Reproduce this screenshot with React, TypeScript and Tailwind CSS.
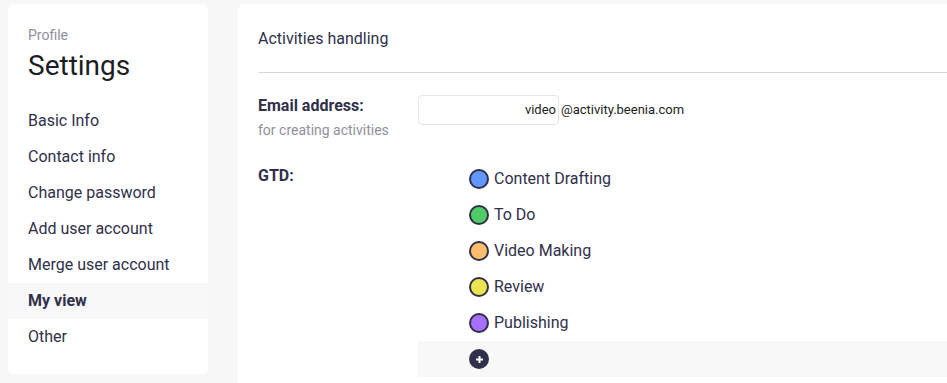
const NAV = ["Basic Info", "Contact info", "Change password", "Add user account", "Merge user account", "My view", "Other"];

const STAGES = [
  { name: "Content Drafting", color: "bg-[#6197ff]" },
  { name: "To Do", color: "bg-[#4fcb68]" },
  { name: "Video Making", color: "bg-[#ffbd6e]" },
  { name: "Review", color: "bg-[#ece352]" },
  { name: "Publishing", color: "bg-[#a66ffd]" },
];

export default function App() {
  return (
    <div className="w-[947px] h-[383px] overflow-hidden bg-[#f7f7f7] flex items-start gap-[30px] pl-2 pt-1 text-[#30304a]" style={{ fontFamily: "Roboto, 'Noto Sans', sans-serif" }}>
      {/* sidebar */}
      <div className="w-[200px] h-[370px] bg-white rounded-md pt-[23px] shrink-0">
        <div className="px-5 text-[14px] leading-4 text-[#8f8f9c]">Profile</div>
        <div className="px-5 text-[28px] leading-8 text-[#1d1d24] mt-[7px]">Settings</div>
        <div className="mt-[21px]">
          {NAV.map((n) => (
            <div key={n} className={`px-5 h-9 flex items-center text-[16px] ${n === "My view" ? "bg-[#f8f8f8] font-bold" : ""}`}>{n}</div>
          ))}
        </div>
      </div>

      {/* main */}
      <div className="flex-1 h-[379px] bg-white rounded-tl-md">
        <div className="pl-5 h-[68px] flex items-center text-[16px] pt-[1px]">Activities handling</div>
        <div className="ml-5 border-t border-[#d9d9dd]" />
        <div className="pl-5 pt-[23px] flex">
          <div className="w-[160px] shrink-0">
            <div className="text-[16px] font-bold leading-5">Email address:</div>
            <div className="text-[14px] text-[#8f8f9c] leading-4 mt-[6px]">for creating activities</div>
          </div>
          <div className="flex items-start">
            <div className="w-[141px] h-[30px] border border-[#e6e6ea] rounded-[4px] flex items-center justify-end pr-[2px] text-[13px] text-[#1d1d24] -mt-[1px]">video</div>
            <div className="text-[13px] text-[#1d1d24] leading-[28px] ml-[2px]">@activity.beenia.com</div>
          </div>
        </div>
        <div className="pl-5 pt-[29px] flex">
          <div className="w-[160px] shrink-0 text-[16px] font-bold leading-5 -mt-[1px]">GTD:</div>
          <div className="flex-1 -mt-[6px]">
            {STAGES.map((s) => (
              <div key={s.name} className="h-9 flex items-center gap-[5px] pl-[51px]">
                <span className={`w-5 h-5 rounded-full border-2 border-[#2f2f45] ${s.color}`} />
                <span className="text-[16px]">{s.name}</span>
              </div>
            ))}
            <div className="h-9 flex items-center pl-[51px] bg-[#f8f8f8]">
              <span className="w-5 h-5 rounded-full bg-[#30304a] flex items-center justify-center">
                <svg width="9" height="9" viewBox="0 0 9 9"><path d="M4.5 1v7M1 4.5h7" stroke="white" strokeWidth="2" /></svg>
              </span>
            </div>
          </div>
        </div>
      </div>
    </div>
  );
}
